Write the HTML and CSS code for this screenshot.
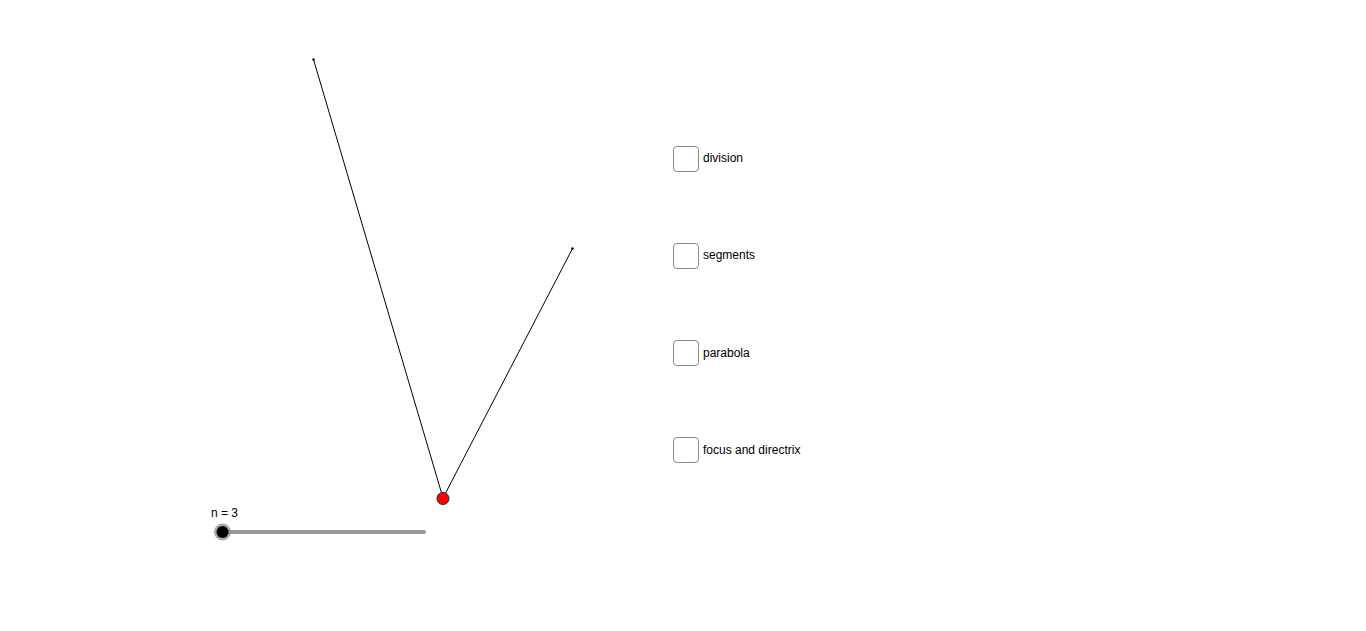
FILE: index.html
```html
<!DOCTYPE html>
<html>
<head>
<meta charset="utf-8">
<link rel="stylesheet" href="styles.css">
</head>
<body>
<div class="applet">
  <svg class="canvas" width="1366" height="631" viewBox="0 0 1366 631">
    <line x1="313.5" y1="59.5" x2="443" y2="498" stroke="#000" stroke-width="1"/>
    <line x1="572.5" y1="248.5" x2="443" y2="498" stroke="#000" stroke-width="1"/>
    <circle cx="313.5" cy="59.5" r="1.2" fill="#000"/>
    <circle cx="572.5" cy="248.5" r="1.2" fill="#000"/>
    <circle cx="443" cy="498.5" r="6" fill="#ff0000" stroke="#222" stroke-width="1"/>
    <line x1="222" y1="532" x2="424" y2="532" stroke="#999" stroke-width="4" stroke-linecap="round"/>
    <circle cx="222.5" cy="532" r="8.5" fill="#8c8c8c" opacity="0.75"/>
    <circle cx="222.5" cy="532" r="6" fill="#000"/>
  </svg>
  <div class="slider-label">n = 3</div>
  <div class="checks">
    <label class="check"><span class="box"></span><span class="txt">division</span></label>
    <label class="check"><span class="box"></span><span class="txt">segments</span></label>
    <label class="check"><span class="box"></span><span class="txt">parabola</span></label>
    <label class="check"><span class="box"></span><span class="txt">focus and directrix</span></label>
  </div>
</div>
</body>
</html>
```

FILE: styles.css
```css
html, body {
  margin: 0;
  padding: 0;
  background: #fff;
}
.applet {
  position: relative;
  width: 1366px;
  height: 631px;
  overflow: hidden;
  font-family: "Liberation Sans", Arial, sans-serif;
  font-size: 12px;
  color: #000;
}
.canvas {
  position: absolute;
  left: 0;
  top: 0;
}
.slider-label {
  position: absolute;
  left: 211px;
  top: 506px;
  line-height: 15px;
}
.checks {
  position: absolute;
  left: 673px;
  top: 145px;
  display: flex;
  flex-direction: column;
  gap: 70.33px;
}
.check {
  display: flex;
  align-items: center;
  gap: 4px;
  height: 27px;
}
.box {
  width: 24px;
  height: 24px;
  border: 1.5px solid #8a8a8a;
  border-radius: 4px;
  background: #fff;
  box-sizing: content-box;
}
.txt {
  line-height: 15px;
}
```
